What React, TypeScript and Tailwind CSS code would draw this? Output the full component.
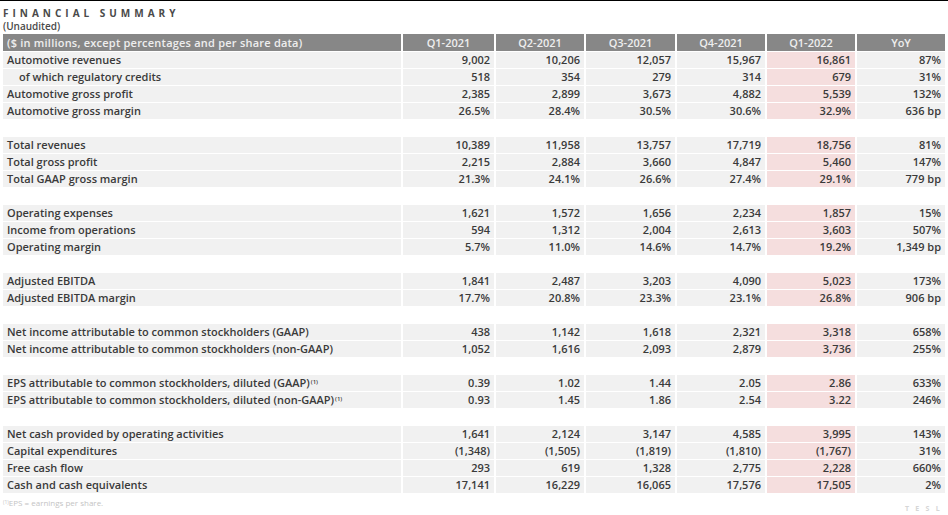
type Row = { label: string; sup?: boolean; indent?: boolean; v: string[] } | null

const cols = ['Q1-2021', 'Q2-2021', 'Q3-2021', 'Q4-2021', 'Q1-2022', 'YoY']

const rows: Row[] = [
  { label: 'Automotive revenues', v: ['9,002', '10,206', '12,057', '15,967', '16,861', '87%'] },
  { label: 'of which regulatory credits', indent: true, v: ['518', '354', '279', '314', '679', '31%'] },
  { label: 'Automotive gross profit', v: ['2,385', '2,899', '3,673', '4,882', '5,539', '132%'] },
  { label: 'Automotive gross margin', v: ['26.5%', '28.4%', '30.5%', '30.6%', '32.9%', '636 bp'] },
  null,
  { label: 'Total revenues', v: ['10,389', '11,958', '13,757', '17,719', '18,756', '81%'] },
  { label: 'Total gross profit', v: ['2,215', '2,884', '3,660', '4,847', '5,460', '147%'] },
  { label: 'Total GAAP gross margin', v: ['21.3%', '24.1%', '26.6%', '27.4%', '29.1%', '779 bp'] },
  null,
  { label: 'Operating expenses', v: ['1,621', '1,572', '1,656', '2,234', '1,857', '15%'] },
  { label: 'Income from operations', v: ['594', '1,312', '2,004', '2,613', '3,603', '507%'] },
  { label: 'Operating margin', v: ['5.7%', '11.0%', '14.6%', '14.7%', '19.2%', '1,349 bp'] },
  null,
  { label: 'Adjusted EBITDA', v: ['1,841', '2,487', '3,203', '4,090', '5,023', '173%'] },
  { label: 'Adjusted EBITDA margin', v: ['17.7%', '20.8%', '23.3%', '23.1%', '26.8%', '906 bp'] },
  null,
  { label: 'Net income attributable to common stockholders (GAAP)', v: ['438', '1,142', '1,618', '2,321', '3,318', '658%'] },
  { label: 'Net income attributable to common stockholders (non-GAAP)', v: ['1,052', '1,616', '2,093', '2,879', '3,736', '255%'] },
  null,
  { label: 'EPS attributable to common stockholders, diluted (GAAP)', sup: true, v: ['0.39', '1.02', '1.44', '2.05', '2.86', '633%'] },
  { label: 'EPS attributable to common stockholders, diluted (non-GAAP)', sup: true, v: ['0.93', '1.45', '1.86', '2.54', '3.22', '246%'] },
  null,
  { label: 'Net cash provided by operating activities', v: ['1,641', '2,124', '3,147', '4,585', '3,995', '143%'] },
  { label: 'Capital expenditures', v: ['(1,348)', '(1,505)', '(1,819)', '(1,810)', '(1,767)', '31%'] },
  { label: 'Free cash flow', v: ['293', '619', '1,328', '2,775', '2,228', '660%'] },
  { label: 'Cash and cash equivalents', v: ['17,141', '16,229', '16,065', '17,576', '17,505', '2%'] },
]

const grid = 'grid grid-cols-[398px_91px_88px_89px_88px_88px_88px] gap-x-[2px]'

export default function App() {
  return (
    <div className="relative h-[515px] w-[948px] overflow-hidden bg-white font-['Open_Sans',sans-serif] text-[#3a3a3a]">
      <div className="h-px w-full bg-black" />
      <div className="pl-[3px] pt-[5px]">
        <div className="h-[14px] text-[10px] font-bold leading-[14px] tracking-[0.4em] text-[#4a4a4a]">FINANCIAL SUMMARY</div>
        <div className="h-[13px] text-[10px] font-semibold leading-[13px] text-[#4a4a4a]">(Unaudited)</div>

        <div className={`${grid} mt-[1px] h-[17px] bg-white text-[11px] font-semibold leading-[17px] text-[#eeeeee]`}>
          <div className="bg-[#878787] pl-[4px] tracking-[0.02em]">($ in millions, except percentages and per share data)</div>
          {cols.map((c) => (
            <div key={c} className="bg-[#878787] text-center">{c}</div>
          ))}
        </div>

        <div className="mt-px flex flex-col gap-y-px">
          {rows.map((r, i) =>
            r === null ? (
              <div key={i} className="h-[16px]" />
            ) : (
              <div key={i} className={`${grid} h-[16px] text-[11px] font-semibold leading-[16px]`}>
                <div className={`bg-[#f1f1f1] ${r.indent ? 'pl-[16px]' : 'pl-[4px]'}`}>
                  {r.label}
                  {r.sup && <sup className="ml-px text-[6px] font-semibold">(1)</sup>}
                </div>
                {r.v.map((v, j) => (
                  <div key={j} className={`${j === 4 ? 'bg-[#f5dede]' : 'bg-[#f1f1f1]'} pr-[4px] text-right`}>
                    {v}
                  </div>
                ))}
              </div>
            ),
          )}
        </div>

        <div className="mt-[5px] text-[8px] leading-[10px] text-[#c4c4c4]">
          <sup className="text-[5px]">(1)</sup>EPS = earnings per share.
        </div>
      </div>
      <div className="absolute bottom-[1px] right-[2px] text-[7px] font-bold tracking-[0.9em] text-[#d6d6d6]">TESL</div>
    </div>
  )
}
